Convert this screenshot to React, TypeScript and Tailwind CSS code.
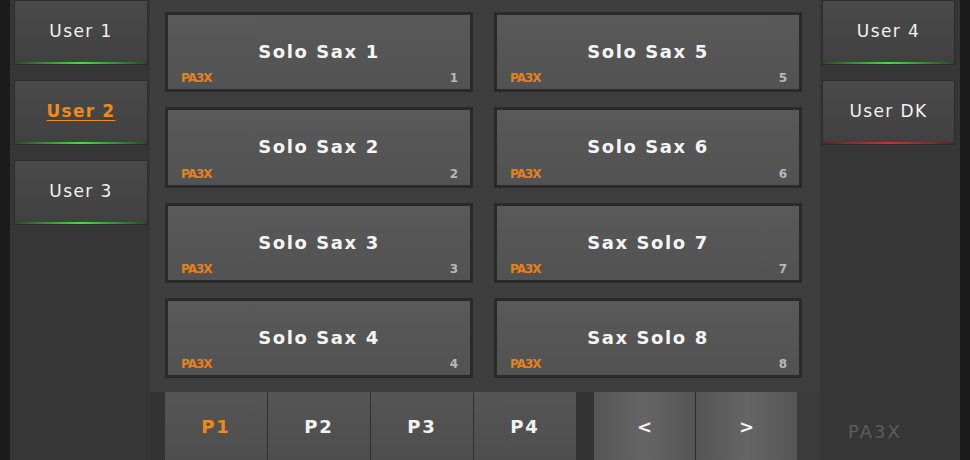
const cards = [
  { name: 'Solo Sax 1', n: 1 },
  { name: 'Solo Sax 5', n: 5 },
  { name: 'Solo Sax 2', n: 2 },
  { name: 'Solo Sax 6', n: 6 },
  { name: 'Solo Sax 3', n: 3 },
  { name: 'Sax Solo 7', n: 7 },
  { name: 'Solo Sax 4', n: 4 },
  { name: 'Sax Solo 8', n: 8 },
]

const leftUsers = [
  { label: 'User 1', active: false },
  { label: 'User 2', active: true },
  { label: 'User 3', active: false },
]

function UserButton({ label, active, line }: { label: string; active?: boolean; line: 'green' | 'red' }) {
  return (
    <div className="h-[65px] flex flex-col border border-b-0 border-[#2c2c2c] bg-gradient-to-b from-[#4a4a4a] to-[#404040]">
      <div
        className={
          active
            ? 'flex-1 flex items-center justify-center pt-[1px] text-[17px] font-bold tracking-[1.2px] underline underline-offset-[3px] text-[#ef8a1c]'
            : 'flex-1 flex items-center justify-center pt-[1px] text-[17px] tracking-[1.4px] text-[#f2f2f2] whitespace-pre'
        }
      >
        {label}
      </div>
      {line === 'green' ? (
        <div className="h-[2px] bg-gradient-to-r from-[#2a4a2a] via-[#3ee23e] to-[#2a4a2a]" />
      ) : (
        <div className="h-[2px] bg-gradient-to-r from-[#4a2a2a] via-[#d42a2a] to-[#4a2a2a]" />
      )}
      <div className="h-[1px] bg-[#2c2c2c]" />
    </div>
  )
}

function Card({ name, n }: { name: string; n: number }) {
  return (
    <div className="flex flex-col border-[3px] border-[#2a2a2a] bg-gradient-to-b from-[#595959] to-[#525252]">
      <div className="flex-1 flex items-center justify-center pt-[17px] text-[18px] font-bold tracking-[1.6px] text-[#f4f4f4]">
        {name}
      </div>
      <div className="flex items-end justify-between pl-[13px] pr-[12px] pb-[5px] h-[18px] leading-none">
        <span className="text-[12px] font-bold tracking-[-1px] text-[#e8801c]">PA3X</span>
        <span className="text-[12px] font-bold text-[#b8b8b8]">{n}</span>
      </div>
    </div>
  )
}

function BarButton({ label, active, light }: { label: string; active?: boolean; light?: boolean }) {
  return (
    <div
      className={
        light
          ? 'w-[101px] flex items-center justify-center text-[18px] font-bold text-[#f2f2f2] bg-gradient-to-r from-[#555555] via-[#656565] to-[#555555]'
          : active
            ? 'w-[102px] flex items-center justify-center text-[18px] font-bold tracking-[2px] text-[#ef8a1c] bg-gradient-to-b from-[#555555] to-[#4e4e4e]'
            : 'w-[102px] flex items-center justify-center text-[18px] font-bold tracking-[2px] text-[#f2f2f2] bg-gradient-to-b from-[#555555] to-[#4e4e4e]'
      }
    >
      {label}
    </div>
  )
}

export default function App() {
  return (
    <div className="flex h-[460px] w-[970px] overflow-hidden bg-[#363636] font-['DejaVu_Sans',sans-serif]">
      <div className="w-[10px] bg-[#1b1b1b]" />

      {/* left users */}
      <aside className="w-[140px] flex flex-col gap-[15px] pl-[4px] pr-[2px]">
        {leftUsers.map((u) => (
          <UserButton key={u.label} label={u.label} active={u.active} line="green" />
        ))}
      </aside>

      {/* centre */}
      <main className="w-[670px] flex flex-col">
        <div className="h-[392px] grid grid-cols-2 grid-rows-4 gap-x-[21px] gap-y-[15px] bg-[#3e3e3e] pt-[12px] pb-[14px] pl-[15px] pr-[18px]">
          {cards.map((c) => (
            <Card key={c.n} name={c.name} n={c.n} />
          ))}
        </div>
        <div className="flex-1 flex pl-[15px] bg-[#333333]">
          <div className="flex gap-[1px] bg-[#2e2e2e]">
            <BarButton label="P1" active />
            <BarButton label="P2" />
            <BarButton label="P3" />
            <BarButton label="P4" />
          </div>
          <div className="w-[18px]" />
          <div className="flex gap-[1px] bg-[#2e2e2e]">
            <BarButton label="<" light />
            <BarButton label=">" light />
          </div>
          <div className="flex-1 bg-[#3b3b3b]" />
        </div>
      </main>

      {/* right users */}
      <aside className="w-[140px] flex flex-col">
        <div className="flex flex-col gap-[15px] pl-[2px] pr-[5px]">
          <UserButton label="User 4" line="green" />
          <UserButton label="User DK" line="red" />
        </div>
        <div className="flex-1" />
        <div className="h-[68px] flex items-center pl-[28px] pt-[10px] text-[18px] tracking-[2px] text-[#5c5c5c]">
          PA3X
        </div>
      </aside>

      <div className="w-[10px] bg-[#1b1b1b]" />
    </div>
  )
}
